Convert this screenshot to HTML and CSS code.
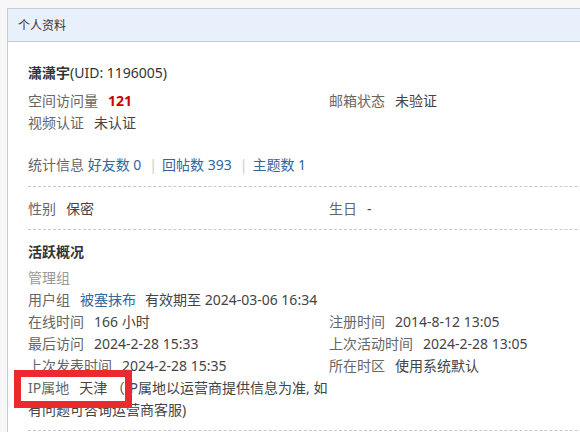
FILE: index.html
```html
<!DOCTYPE html>
<html lang="zh-CN">
<head>
<meta charset="utf-8">
<title>个人资料</title>
<link rel="stylesheet" href="styles.css">
</head>
<body>
<div class="page">
  <div class="card">
    <div class="card-hd">个人资料</div>
    <div class="card-bd">
      <h2 class="name"><b>潇潇宇</b>(UID: 1196005)</h2>
      <ul class="grid sec-top">
        <li><span class="lbl">空间访问量</span><strong class="hot">121</strong></li>
        <li><span class="lbl">邮箱状态</span>未验证</li>
        <li><span class="lbl">视频认证</span>未认证</li>
      </ul>
      <div class="stats">
        <span class="lbl-plain">统计信息</span> <a href="#">好友数 0</a><span class="pipe">|</span><a href="#">回帖数 393</a><span class="pipe">|</span><a href="#">主题数 1</a>
      </div>
      <ul class="grid sec-dash">
        <li><span class="lbl">性别</span>保密</li>
        <li><span class="lbl">生日</span>-</li>
      </ul>
      <h2 class="sub">活跃概况</h2>
      <ul class="plain">
        <li class="muted">管理组</li>
        <li><span class="lbl">用户组</span><a href="#" class="grp">被塞抹布</a>有效期至 2024-03-06 16:34</li>
      </ul>
      <ul class="grid sec-dash">
        <li><span class="lbl">在线时间</span>166 小时</li>
        <li><span class="lbl">注册时间</span>2014-8-12 13:05</li>
        <li><span class="lbl">最后访问</span>2024-2-28 15:33</li>
        <li><span class="lbl">上次活动时间</span>2024-2-28 13:05</li>
        <li><span class="lbl">上次发表时间</span>2024-2-28 15:35</li>
        <li><span class="lbl">所在时区</span>使用系统默认</li>
        <li><span class="lbl">IP属地</span>天津 （IP属地以运营商提供信息为准, 如有问题可咨询运营商客服)</li>
      </ul>
    </div>
  </div>
</div>
<div class="mark"></div>
</body>
</html>
```

FILE: styles.css
```css
html, body {
  margin: 0;
  padding: 0;
  overflow: hidden;
  background: #f7f7f7;
}
body {
  font-family: "Noto Sans", "Noto Sans CJK SC", sans-serif;
  font-size: 14px;
  color: #444;
  height: 432px;
  position: relative;
}
ul {
  list-style: none;
  margin: 0;
  padding: 0;
}
a {
  color: #336699;
  text-decoration: none;
}
.page {
  padding: 8px 0 0 7px;
}
.card {
  width: 720px;
  border: 1px solid #c4ccd6;
  background: #fff;
}
.card-hd {
  height: 32px;
  line-height: 32px;
  padding-left: 10px;
  background: #e8f0fb;
  border-bottom: 1px solid #c4ccd6;
  font-family: "Noto Sans CJK SC", sans-serif;
  font-size: 12px;
  color: #333;
}
.card-bd {
  padding: 19px 0 0 20px;
  line-height: 22px;
}
.name {
  margin: 0 0 6px;
  font-size: 14px;
  font-weight: normal;
  line-height: 22px;
  color: #333;
}
.name b {
  font-family: "Noto Sans CJK SC", sans-serif;
  font-weight: bold;
}
.grid {
  display: grid;
  grid-template-columns: 301px 301px;
}
.lbl {
  color: #666;
  margin-right: 10px;
}
.lbl-plain {
  color: #666;
}
.hot {
  color: #cc0000;
  font-weight: bold;
}
.sec-top {
  margin-bottom: 20px;
}
.stats {
  padding-bottom: 10px;
  border-bottom: 1px dashed #c8c8c8;
  margin-bottom: 11px;
}
.pipe {
  color: #ccc;
  margin: 0 5px 0 8px;
}
.sec-dash {
  padding-bottom: 9px;
  border-bottom: 1px dashed #c8c8c8;
  margin-bottom: 10px;
}
.sub {
  margin: 0 0 5px;
  font-family: "Noto Sans CJK SC", sans-serif;
  font-size: 14px;
  font-weight: bold;
  line-height: 22px;
  color: #333;
}
.muted {
  color: #999;
}
.grp {
  margin-right: 9px;
}
.mark {
  position: absolute;
  left: 14px;
  top: 370px;
  width: 104px;
  height: 24px;
  border: 7px solid #ea2a2e;
}
```
